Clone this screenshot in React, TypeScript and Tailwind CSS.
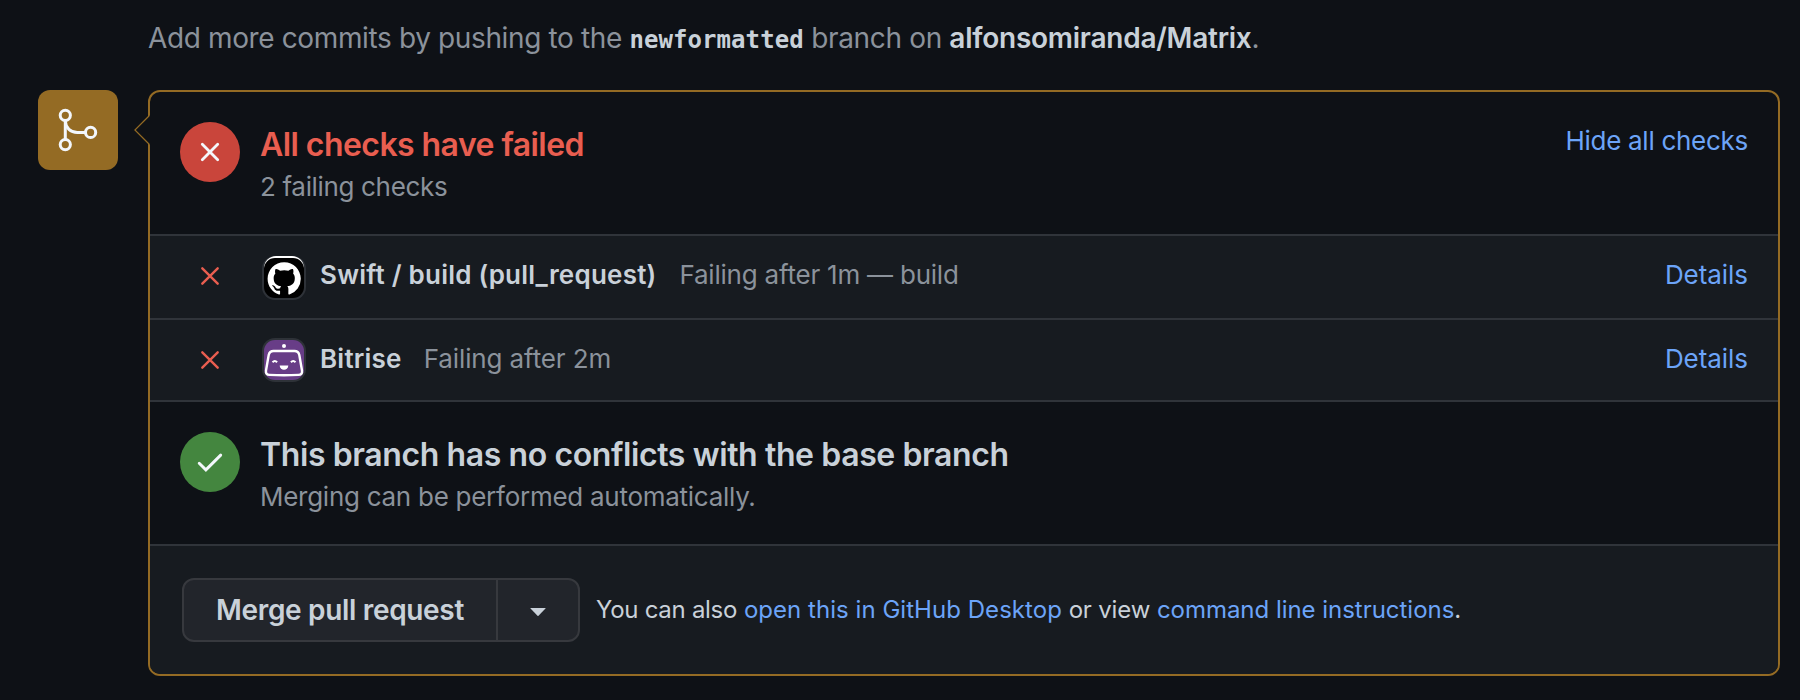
import React from "react";

const MARK =
  "M8 0C3.58 0 0 3.58 0 8c0 3.54 2.29 6.53 5.47 7.59.4.07.55-.17.55-.38 0-.19-.01-.82-.01-1.49-2.01.37-2.53-.49-2.69-.94-.09-.23-.48-.94-.82-1.13-.28-.15-.68-.52-.01-.53.63-.01 1.08.58 1.23.82.72 1.21 1.87.87 2.33.66.07-.52.28-.87.51-1.07-1.78-.2-3.64-.89-3.64-3.95 0-.87.31-1.59.82-2.15-.08-.2-.36-1.02.08-2.12 0 0 .67-.21 2.2.82.64-.18 1.32-.27 2-.27s1.36.09 2 .27c1.53-1.04 2.2-.82 2.2-.82.44 1.1.16 1.92.08 2.12.51.56.82 1.27.82 2.15 0 3.07-1.87 3.75-3.65 3.95.29.25.54.73.54 1.48 0 1.07-.01 1.93-.01 2.2 0 .21.15.46.55.38A8.01 8.01 0 0 0 16 8c0-4.42-3.58-8-8-8z";

function MergeIcon() {
  return (
    <svg viewBox="0 0 80 80" className="size-20" fill="none" stroke="#f3f7fc" strokeWidth="3">
      <circle cx="27.3" cy="25.3" r="5.1" />
      <circle cx="27.3" cy="54.6" r="5.1" />
      <circle cx="52.6" cy="42.4" r="5.1" />
      <path d="M27.3 30V50" />
      <path d="M27.3 31c.4 7 5.200 11.400 12 11.400H48" />
    </svg>
  );
}

function Cross({ className }: { className: string }) {
  return (
    <svg viewBox="0 0 20 20" className={className} fill="none" stroke="currentColor" strokeLinecap="round">
      <path d="M2.300 2.300l15.400 15.400M17.700 2.300L2.300 17.700" />
    </svg>
  );
}

function Check() {
  return (
    <svg viewBox="0 0 60 60" className="size-15" fill="none" stroke="#f3f7fc" strokeWidth="2.900" strokeLinecap="round">
      <path d="M19.200 31.200l6.700 6.700L40.700 23.100" />
    </svg>
  );
}

function GitHubAvatar() {
  return (
    <svg viewBox="0 0 44 48" className="h-12 w-11">
      <rect x="0" y="2" width="44" height="44" rx="13" fill="#2e3238" />
      <path d="M2 14A12 12 0 0 1 14 2H30A12 12 0 0 1 42 14Z" fill="#fff" />
      <rect x="2" y="4" width="40" height="40" rx="11" fill="#000" />
      <path transform="translate(5.600 8.200) scale(2.075)" d={MARK} fill="#fff" />
    </svg>
  );
}

function BitriseAvatar() {
  return (
    <svg viewBox="0 0 44 48" className="h-12 w-11">
      <rect x="0" y="0" width="44" height="44" rx="13" fill="#2e3238" />
      <rect x="2" y="2" width="40" height="40" rx="11" fill="#683d87" />
      <circle cx="22" cy="8" r="2" fill="#fff" />
      <path
        d="M11.500 13H32.500Q36.500 13 37.300 17L40 32.500Q40.600 36.700 36.500 36.900Q22 37.600 7.500 36.900Q3.400 36.700 4 32.500L6.700 17Q7.500 13 11.500 13Z"
        fill="none"
        stroke="#fff"
        strokeWidth="2.400"
      />
      <path d="M10.500 24.200q2.300-2.400 4.600 0M28.900 24.200q2.300-2.400 4.600 0" fill="none" stroke="#fff" strokeWidth="2" />
      <path d="M17.700 27.500h8.600a4.300 4.300 0 0 1-8.600 0z" fill="#fff" />
    </svg>
  );
}

function CheckRow({
  avatar,
  name,
  status,
  className,
}: {
  avatar: React.ReactNode;
  name: string;
  status: React.ReactNode;
  className: string;
}) {
  return (
    <div className={`flex items-start border-t-2 border-[#30343a] bg-[#171b20] pr-[30px] pl-[50px] text-[26px] leading-10 ${className}`}>
      <Cross className="mt-[30px] size-5 stroke-[2.400] text-[#e95e50]" />
      <div className="mt-[18px] ml-[42px]">{avatar}</div>
      <span className="mt-[19px] ml-3.5 font-semibold tracking-[0.22px] text-[#c9d1d9]">{name}</span>
      <span className="mt-[19px] ml-[22px] text-[#8b929b]">{status}</span>
      <a className="mt-[19px] ml-auto tracking-[-0.05px] text-[#6ca4f8]">Details</a>
    </div>
  );
}

export default function App() {
  return (
    <main className="h-[700px] w-[1800px] overflow-hidden bg-[#0e1116] pt-[18px] pr-5 pl-[38px] font-[Inter,'Liberation_Sans',sans-serif] font-[430] whitespace-nowrap">
      <p className="ml-[110px] h-[72px] text-[28px] leading-10 tracking-[-0.37px] text-[#8b929b]">
        Add more commits by pushing to the{" "}
        <span className="font-['DejaVu_Sans_Mono',monospace] text-[24px] font-bold tracking-[0.08px] text-[#c9d1d9]">newformatted</span>{" "}
        <span className="tracking-[-0.35px]">branch on</span>{" "}
        <span className="font-semibold tracking-[-0.25px] text-[#c9d1d9]">alfonsomiranda/Matrix</span>.
      </p>

      <div className="flex items-start">
        <div className="size-20 shrink-0 rounded-xl bg-[#946b24]">
          <MergeIcon />
        </div>

        <section className="relative ml-[30px] h-[586px] grow rounded-xl border-2 border-[#946b24]">
          <svg viewBox="0 0 17 30" className="absolute top-[23px] -left-4 h-[30px] w-[17px]" fill="none">
            <path d="M17 .8H15.200L.9 15 15.200 29.200H17Z" fill="#0e1116" />
            <path d="M15.200 .8L.9 15l14.300 14.200" stroke="#946b24" strokeWidth="1.200" />
          </svg>

          <div className="flex h-[142px] items-start px-[30px] pt-[30px]">
            <div className="flex size-15 items-center justify-center rounded-full bg-[#c9453b]">
              <Cross className="size-5 stroke-[2.800] text-[#f3f7fc]" />
            </div>
            <div className="mt-px ml-5">
              <h3 className="text-[32px] leading-11 font-semibold tracking-[-0.56px] text-[#e95e50]">All checks have failed</h3>
              <p className="text-[26px] leading-10 tracking-[-0.34px] text-[#8b929b]">2 failing checks</p>
            </div>
            <a className="mt-px ml-auto text-[26px] leading-9 tracking-[-0.28px] text-[#6ca4f8]">Hide all checks</a>
          </div>

          <CheckRow
            className="h-[84px]"
            avatar={<GitHubAvatar />}
            name="Swift / build (pull_request)"
            status={<span className="ml-px tracking-[-0.22px]">Failing after 1m — build</span>}
          />
          <CheckRow
            className="h-[82px]"
            avatar={<BitriseAvatar />}
            name="Bitrise"
            status={<span className="tracking-[-0.12px]">Failing after 2m</span>}
          />

          <div className="flex h-36 items-start border-t-2 border-[#30343a] px-[30px] pt-[30px]">
            <div className="size-15 rounded-full bg-[#44863f]">
              <Check />
            </div>
            <div className="mt-px ml-5">
              <h3 className="text-[32px] leading-11 font-semibold tracking-[-0.4px] text-[#c9d1d9]">
                This branch has no conflicts with the base branch
              </h3>
              <p className="text-[26px] leading-10 tracking-[-0.27px] text-[#8b929b]">Merging can be performed automatically.</p>
            </div>
          </div>

          <div className="flex h-[130px] items-start rounded-b-[10px] border-t-2 border-[#30343a] bg-[#171b20] pt-8 pl-8">
            <div className="flex h-16 w-[398px] rounded-xl border-2 border-[#37393e] bg-[#22252b]">
              <button className="w-[314px] border-r-2 border-[#37393e] text-[28px] leading-[60px] font-semibold tracking-[-0.33px] text-[#c9d1d9]">
                Merge pull request
              </button>
              <button className="flex grow items-center justify-center">
                <svg viewBox="0 0 16 8" className="mt-1 h-2 w-4">
                  <path d="M.8 0H15.200q.8 0 .3.600L8.500 7.700q-.5.500-1 0L.5.600Q0 0 .8 0Z" fill="#c9d1d9" />
                </svg>
              </button>
            </div>
            <p className="ml-4 text-[24px] leading-[64px] text-[#c9d1d9]">
              <span className="tracking-[-0.28px]">You can also</span>{" "}
              <a className="tracking-[0.04px] text-[#6ca4f8]">open this in GitHub Desktop</a>{" "}
              <span className="tracking-[-0.17px]">or view</span>{" "}
              <a className="tracking-[-0.03px] text-[#6ca4f8]">command line instructions</a>.
            </p>
          </div>
        </section>
      </div>
    </main>
  );
}
